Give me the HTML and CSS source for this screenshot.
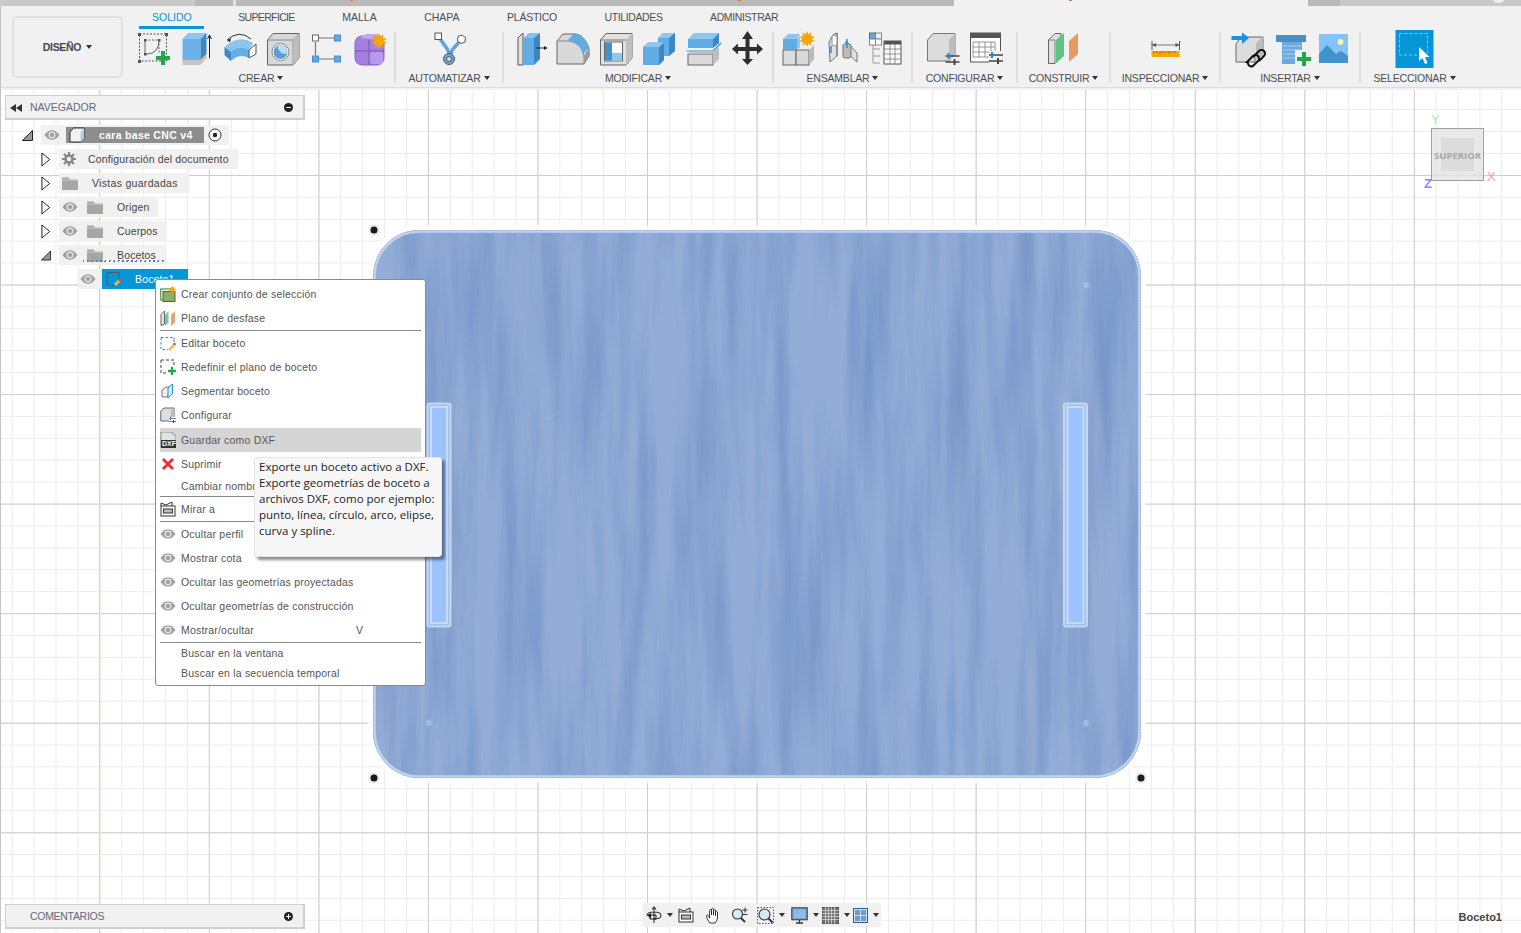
FILE: index.html
```html
<!DOCTYPE html>
<html lang="es">
<head>
<meta charset="utf-8">
<title>Fusion</title>
<link rel="stylesheet" href="styles.css">
</head>
<body>
<svg class="defs" width="0" height="0">
  <defs>
    <symbol id="eye" viewBox="0 0 16 10"><path d="M0.5 5C3 1.5 5.5 0.2 8 0.2S13 1.5 15.5 5C13 8.5 10.500 9.800 8 9.800S3 8.500 0.5 5Z" fill="#a0a0a0"/><circle cx="8" cy="5" r="3.400" fill="#e8e8e8"/><circle cx="8" cy="5" r="2.200" fill="#a0a0a0"/></symbol>
    <symbol id="folder" viewBox="0 0 16 14"><path d="M0 1.500h6.500l1.500 2H16V14H0Z" fill="#a6a6a6"/><path d="M0 4h16" stroke="#d8d8d8" stroke-width=".8"/></symbol>
    <symbol id="star" viewBox="0 0 16 16"><path d="M8 0l1.600 3.600L12.500 1l-.6 4L16 5.700l-3.300 2.300L16 10.300l-4.100.7.600 4-2.900-2.600L8 16l-1.600-3.600L3.500 15l.6-4L0 10.300l3.300-2.300L0 5.700 4.100 5l-.6-4 2.900 2.600Z" fill="#f5a50c"/></symbol>
    <symbol id="plus" viewBox="0 0 14 14"><path d="M5 0h4v5h5v4H9v5H5V9H0V5h5Z" fill="#1fa84a"/></symbol>
    <symbol id="slider" viewBox="0 0 14 12"><path d="M0 3h14M0 9h14" stroke="#444" stroke-width="1.400"/><path d="M3 0v6" stroke="#1a8ad4" stroke-width="2"/><path d="M9 6v6" stroke="#444" stroke-width="2"/></symbol>
  </defs>
</svg>
<div class="app">
  <div class="browser-tabs">
    <span class="bt bt-a"></span><span class="bt bt-b"></span><span class="bt bt-gap"></span><span class="bt bt-c"></span><span class="bt bt-active"></span><span class="bt bt-d"></span><span class="bt bt-e"></span>
  </div>
  <header class="ribbon">
    <div class="design-wrap"><button class="design">DISEÑO<i class="caret caret-dark"></i></button></div>
    <div class="ribbon-main">
      <nav class="tabs">
        <span class="tab tab-active">SOLIDO</span><span class="tab tab-n1">SUPERFICIE</span><span class="tab">MALLA</span><span class="tab">CHAPA</span><span class="tab tab-n3">PLÁSTICO</span><span class="tab tab-n2">UTILIDADES</span><span class="tab tab-n2">ADMINISTRAR</span>
      </nav>
      <div class="groups">
        <section class="group g1">
          <div class="icons">
            <svg class="ic" viewBox="0 0 43 38"><rect x="6.500" y="4" width="27" height="27" fill="none" stroke="#555" stroke-dasharray="2 1.500"/><g fill="#555"><rect x="5" y="3" width="3" height="3"/><rect x="32" y="3" width="3" height="3"/><rect x="5" y="30" width="3" height="3"/></g><path d="M12 10h14v14" fill="none" stroke="#666" stroke-dasharray="2 1.500"/><path d="M12 10v14h3q11 -1 11 -14" fill="none" stroke="#666"/><g fill="#555"><rect x="11" y="9" width="2.500" height="2.500"/><rect x="25" y="9" width="2.500" height="2.500"/><rect x="11" y="23" width="2.500" height="2.500"/></g><use href="#plus" x="23" y="21" width="14" height="14"/></svg>
            <svg class="ic" viewBox="0 0 43 38"><path d="M6.500 9L12 3H30.500L24.500 9Z" fill="#8ec4ee"/><rect x="6.500" y="9" width="18" height="21" fill="#6cb0e6"/><path d="M24.500 9L30.500 3V24L24.500 30Z" fill="#3f87c0"/><path d="M6.500 30H24.500L30.500 24V28L24.500 35H6.500Z" fill="#c4c4c4"/><path d="M33.500 28V6M31.500 9l2-4 2 4" fill="none" stroke="#222" stroke-width="1"/></svg>
            <svg class="ic" viewBox="0 0 43 38"><path d="M8 10Q20 -1 32 9" fill="none" stroke="#333"/><path d="M8 10l4-1.500-1 4Z" fill="#333"/><path d="M5.500 17Q20 4 34 13L30 20Q20 14 12 22Z" fill="#8cc4f0"/><path d="M5.500 17L12 22V31L5.500 25Z" fill="#3d8ac8"/><path d="M12 22Q20 14 30 20V28Q20 23 12 31Z" fill="#62ace8"/><path d="M30 20L37 14V24L30 28Z" fill="#fff" stroke="#555"/></svg>
            <svg class="ic" viewBox="0 0 43 38"><path d="M5.500 10L11 3.500H37V28L31 35H5.500Z" fill="#d8d8d8" stroke="#666"/><path d="M5.500 10H31V35M31 10L37 3.500" fill="none" stroke="#888"/><path d="M31 10L37 3.500V28L31 35Z" fill="#bdbdbd"/><circle cx="18.500" cy="22" r="8.500" fill="#fff" stroke="#888"/><circle cx="18.500" cy="22" r="7" fill="#5a9fd8"/><path d="M16 15.500a7 7 0 0 0 9 8a7 7 0 0 0-9-8Z" fill="#bcdcf6"/></svg>
            <svg class="ic" viewBox="0 0 43 38"><path d="M14 8H29M14 29H29M10.500 12V25" stroke="#777" stroke-width="1.200"/><rect x="7.500" y="5" width="6" height="6" fill="#fff" stroke="#666"/><g fill="#62a8e0" stroke="#4a8fc8"><rect x="29.500" y="5" width="6" height="6"/><rect x="7.500" y="26" width="6" height="6"/><rect x="29.500" y="26" width="6" height="6"/></g></svg>
            <svg class="ic" viewBox="0 0 43 38"><rect x="7" y="6" width="29" height="29" rx="7" fill="#a47fe0" stroke="#8a62cc"/><path d="M7 21H36M21 10V35" stroke="#7c54c0"/><path d="M12 8L18 4H30L24 9Z" fill="#c2a6ee"/><rect x="22" y="22" width="13" height="12" rx="3" fill="#b79ae8"/><use href="#star" x="23" y="3" width="16" height="16"/></svg>
          </div>
          <div class="glabel">CREAR<i class="caret"></i></div>
        </section>
        <section class="group g2">
          <div class="icons">
            <svg class="ic" viewBox="0 0 43 38"><path d="M10 6L20 20M33 10L24 20M20 20L22 28M24 20L22 28" fill="none" stroke="#5fa3d8" stroke-width="3.500"/><rect x="7" y="3" width="6.500" height="6.500" fill="#fff" stroke="#555"/><path d="M30 6.500l4-1.500 3.500 2.500-.5 4.500-4 1.500-3.500-2.500Z" fill="#fff" stroke="#555"/><circle cx="21" cy="29" r="5.500" fill="#6ea6d0" stroke="#557"/><circle cx="21" cy="29" r="2.500" fill="#ddd" stroke="#555"/></svg>
          </div>
          <div class="glabel">AUTOMATIZAR<i class="caret"></i></div>
        </section>
        <section class="group g3">
          <div class="icons">
            <svg class="ic" viewBox="0 0 43 38"><path d="M11 8L16 3V35H11Z" fill="#e0e0e0" stroke="#555"/><path d="M16.500 8L22 3H33L27 8Z" fill="#86bfec"/><rect x="16.500" y="8" width="10.500" height="27" fill="#62ace6"/><path d="M27 8L33 3V29L27 35Z" fill="#3d86c2"/><path d="M29 18H40" stroke="#222"/><path d="M37 16l3.500 2-3.500 2Z" fill="#222"/></svg>
            <svg class="ic" viewBox="0 0 43 38"><path d="M6 11L12 4H25Q33 5 38 18V26L33 34H6Z" fill="#d8d8d8" stroke="#666"/><path d="M6 11H18Q31 13 33 26V34" fill="none" stroke="#888"/><path d="M17 10L23 3Q35 6 38 18L32 24Q29 13 17 10Z" fill="#62ace6"/><path d="M33 26L38 18V26L33 34Z" fill="#9a9a9a"/></svg>
            <svg class="ic" viewBox="0 0 43 38"><path d="M5.500 10L11 3.500H37V28L31 35H5.500Z" fill="#e0e0e0" stroke="#666"/><path d="M31 10L37 3.500V28L31 35Z" fill="#bfbfbf"/><rect x="9.500" y="12" width="18" height="19" fill="#fff" stroke="#666"/><rect x="10" y="23" width="17" height="7.500" fill="#8cc8fa"/><rect x="10" y="12.500" width="7" height="18" fill="#4a90c8"/><path d="M5.500 10H31" stroke="#777"/></svg>
            <svg class="ic" viewBox="0 0 43 38"><path d="M5 17L10 12.500H20V8L25 3H37L37 21L31 26H26V30L21 35H5Z" fill="#62ace6"/><path d="M20 8L25 3H37L31 8Z" fill="#8ec6f0"/><path d="M31 8L37 3V21L31 26ZM21 17L26 13V30L21 35Z" fill="#3d86c2"/><path d="M5 17L10 12.500H26L21 17Z" fill="#8ec6f0"/></svg>
            <svg class="ic" viewBox="0 0 43 38"><path d="M6 9L12 3H37L31 9Z" fill="#8ec6f0"/><rect x="6" y="9" width="25" height="9" fill="#62ace6"/><path d="M31 9L37 3V13L31 18Z" fill="#3d86c2"/><path d="M4.500 21H31L39 13" fill="none" stroke="#2b8bd6" stroke-width="1.200"/><rect x="6" y="24" width="25" height="11" fill="#dadada" stroke="#666"/><path d="M6 24L10 21H31L37 17V29L31 35V24Z" fill="#bebebe"/></svg>
            <svg class="ic" viewBox="0 0 43 38"><path d="M21.500 1L27 9H23.500V17H31V13.500L37 19 31 24.500V21H23.500V29H27L21.500 35 16 29H19.500V21H12V24.500L6 19 12 13.500V17H19.500V9H16Z" fill="#2e2e2e"/></svg>
          </div>
          <div class="glabel">MODIFICAR<i class="caret"></i></div>
        </section>
        <section class="group g4">
          <div class="icons">
            <svg class="ic" viewBox="0 0 43 38"><rect x="5" y="20" width="13" height="15" fill="#dcdcdc" stroke="#666"/><rect x="18" y="20" width="13" height="15" fill="#d8d8d8" stroke="#666"/><path d="M31 20L36 15V29L31 35Z" fill="#bbb"/><rect x="5" y="9" width="14" height="11" fill="#62ace6"/><path d="M5 9L10 4H22L19 9ZM19 9L22 6V17L19 20Z" fill="#8ec6f0"/><use href="#star" x="21" y="1" width="16" height="16"/></svg>
            <svg class="ic" viewBox="0 0 43 38"><path d="M8 12Q12 3 16 3V26L9 32Z" fill="#e0e0e0" stroke="#777"/><path d="M16 3L16 26" stroke="#777"/><rect x="11" y="5" width="5" height="11" rx="2" fill="#fff" stroke="#888"/><path d="M10 16V23" stroke="#2b8bd6" stroke-width="1.500"/><path d="M25 11L36 23V32L25 22Z" fill="#e0e0e0" stroke="#777"/><rect x="22" y="14" width="8" height="14" rx="2" fill="#bbb" stroke="#777"/><path d="M26 9V18" stroke="#2b8bd6" stroke-width="1.500"/></svg>
            <svg class="ic" viewBox="0 0 43 38"><rect x="5.500" y="3" width="6" height="6" fill="#62ace6" stroke="#666"/><rect x="11.500" y="3" width="6" height="6" fill="none" stroke="#888"/><rect x="5.500" y="9" width="6" height="6" fill="#fff" stroke="#888"/><rect x="11.500" y="9" width="6" height="6" fill="#fff" stroke="#888"/><path d="M9 15V33M9 19H16M9 26H16M9 33H16" fill="none" stroke="#999"/><rect x="20" y="11" width="17" height="23" fill="#fff" stroke="#555"/><rect x="20" y="11" width="17" height="3.500" fill="#555"/><path d="M20 19H37M20 24H37M20 29H37M26 14V34M31 14V34" stroke="#777" stroke-width=".8"/></svg>
          </div>
          <div class="glabel">ENSAMBLAR<i class="caret"></i></div>
        </section>
        <section class="group g5">
          <div class="icons">
            <svg class="ic" viewBox="0 0 43 38"><path d="M5.500 10L11 3.500H33V25H28V31H5.500Z" fill="#dcdcdc" stroke="#777"/><path d="M27 10L33 3.500V25L27 31Z" fill="#bcbcbc"/><use href="#slider" x="23" y="23" width="15" height="12"/></svg>
            <svg class="ic" viewBox="0 0 43 38"><rect x="5.500" y="3" width="30" height="29" fill="#fff" stroke="#555"/><rect x="5.500" y="3" width="30" height="5" fill="#555"/><path d="M8 12H30V27H8ZM8 17H30M8 22H30M14 12V27M20 12V27M26 12V27" fill="none" stroke="#888" stroke-width=".9"/><rect x="24" y="21" width="14" height="13" fill="#f1f1f1"/><use href="#slider" x="24" y="22" width="14" height="12"/></svg>
          </div>
          <div class="glabel">CONFIGURAR<i class="caret"></i></div>
        </section>
        <section class="group g6">
          <div class="icons">
            <svg class="ic" viewBox="0 0 43 38"><path d="M6.500 10L13 3.500H19V27L13 33.500H6.500Z" fill="#e0e0e0" stroke="#666"/><path d="M6.500 10H13V33.500" fill="none" stroke="#888"/><path d="M14 10L22 3V26L14 33Z" fill="#5cc583"/><path d="M27 11L36 3V24L27 32Z" fill="#e69a62"/></svg>
          </div>
          <div class="glabel">CONSTRUIR<i class="caret"></i></div>
        </section>
        <section class="group g7">
          <div class="icons">
            <svg class="ic" viewBox="0 0 43 38"><path d="M8 11V20M35.500 11V20" stroke="#555"/><path d="M8 15H35.500" stroke="#777"/><path d="M8 15l4-2v4ZM35.500 15l-4-2v4Z" fill="#555"/><rect x="7.500" y="21" width="28" height="6" fill="#f5a700"/><path d="M10 21v2M13 21v2M16 21v3M19 21v2M22 21v2M25 21v3M28 21v2M31 21v2" stroke="#8a5a00" stroke-width=".8"/></svg>
          </div>
          <div class="glabel">INSPECCIONAR<i class="caret"></i></div>
        </section>
        <section class="group g8">
          <div class="icons">
            <svg class="ic" viewBox="0 0 43 38"><path d="M10 14L15 7H37V24H29V32H10Z" fill="#dcdcdc" stroke="#666"/><path d="M30 13L37 7V26L30 30Z" fill="#bcbcbc"/><path d="M5.500 6H16V2.500L23 8 16 14V10H5.500Z" fill="#1b8fe0"/><path d="M21 32l6-6a3.500 3.500 0 0 1 5 5l-5 5a3.500 3.500 0 0 1-5-4ZM27 27l6-6a3.500 3.500 0 0 1 5 5l-5 5" fill="none" stroke="#111" stroke-width="2"/></svg>
            <svg class="ic" viewBox="0 0 43 38"><path d="M7 5H37V12H33V34H13V12H7Z" fill="#6ea9dc"/><rect x="7" y="5" width="30" height="7" fill="#4a90c8"/><path d="M14 16H32M14 20H32M14 24H32M14 28H32" stroke="#a9d0f0"/><rect x="26" y="20" width="16" height="16" fill="#f1f1f1"/><use href="#plus" x="28" y="22" width="14" height="14"/></svg>
            <svg class="ic" viewBox="0 0 43 38"><rect x="7" y="4" width="29" height="29" fill="#82c4fa"/><circle cx="28.500" cy="12" r="3" fill="#fdf3b0"/><path d="M7 24L15 15 24 24 29 21 36 26V33H7Z" fill="#3f92cc"/></svg>
          </div>
          <div class="glabel">INSERTAR<i class="caret"></i></div>
        </section>
        <section class="group g9">
          <div class="icons">
            <svg class="ic" viewBox="0 0 43 38"><rect x="2.500" y="0" width="38" height="38" fill="#0696d7"/><rect x="6.500" y="3.500" width="28" height="21.500" fill="none" stroke="#7fe08a" stroke-dasharray="3 2"/><path d="M26 17V31L29.500 28 32 34 34.500 33 32 27H36.500Z" fill="#fff"/></svg>
          </div>
          <div class="glabel">SELECCIONAR<i class="caret"></i></div>
        </section>
      </div>
    </div>
  </header>

  <main class="viewport">
    <svg class="model" viewBox="0 0 800 580" width="800" height="580">
      <defs>
        <filter id="wood" x="0" y="0" width="100%" height="100%" color-interpolation-filters="sRGB">
          <feTurbulence type="fractalNoise" baseFrequency="0.05 0.004" numOctaves="5" seed="11"/>
          <feColorMatrix values="0 0 0 0 .36  0 0 0 0 .50  0 0 0 0 .74  1.700 0 0 0 -.62"/>
        </filter>
        <filter id="soft" x="-50%" y="-50%" width="200%" height="200%"><feGaussianBlur stdDeviation="9 24"/></filter>
        <clipPath id="plate"><rect x="16" y="16" width="768" height="548" rx="46"/></clipPath>
      </defs>
      <rect x="11" y="11" width="778" height="558" rx="50" fill="#fff" opacity=".8"/>
      <rect x="16" y="16" width="768" height="548" rx="46" fill="#93add6"/>
      <g clip-path="url(#plate)">
        <rect x="16" y="16" width="768" height="548" filter="url(#wood)" opacity=".55"/>
        <g filter="url(#soft)" fill="#6484b8" opacity=".2">
          <ellipse cx="345" cy="216" rx="18" ry="60"/>
          <ellipse cx="190" cy="100" rx="14" ry="70"/>
          <ellipse cx="445" cy="470" rx="16" ry="70"/>
          <ellipse cx="600" cy="250" rx="16" ry="100"/>
        </g>
      </g>
      <rect x="17.500" y="17.500" width="765" height="545" rx="45" fill="none" stroke="#c0d3ef" stroke-width="2.500"/>
      <rect x="16.500" y="16.500" width="767" height="547" rx="46" fill="none" stroke="#8aa0c4" stroke-width=".6" stroke-dasharray="1 2"/>
      <g class="slot">
        <rect x="70.500" y="189.500" width="23" height="223" rx="2" fill="#a8c0e6" stroke="#c3d6f2" stroke-width="2"/>
        <rect x="73" y="192" width="18" height="218" fill="#c6dcfa"/>
        <rect x="75" y="194" width="14" height="214" fill="#9cc3ff"/>
      </g>
      <g class="slot">
        <rect x="707" y="189.500" width="23" height="223" rx="2" fill="#a8c0e6" stroke="#c3d6f2" stroke-width="2"/>
        <rect x="709.500" y="192" width="18" height="218" fill="#c6dcfa"/>
        <rect x="711.500" y="194" width="14" height="214" fill="#9cc3ff"/>
      </g>
      <g fill="#a3bce2" stroke="#8ea9d4"><circle cx="729" cy="71" r="3.500"/><circle cx="72" cy="509" r="3.500"/><circle cx="729" cy="509" r="3.500"/></g>
      <g fill="#1c1c1c" stroke="#e8e8e8" stroke-width="2"><circle cx="17" cy="16" r="4.500"/><circle cx="17" cy="564" r="4.500"/><circle cx="784" cy="564" r="4.500"/></g>
    </svg>

    <div class="axis-y"></div>

    <div class="panel navigator">
      <svg class="collapse" viewBox="0 0 12 8" width="12" height="8"><path d="M6 0v8L0 4ZM12 0v8L6 4Z" fill="#333"/></svg>
      <span class="panel-title">NAVEGADOR</span>
      <span class="pm pm-minus"></span>
    </div>

    <div class="tree">
      <div class="row l0">
        <svg class="twist" viewBox="0 0 11 11"><path d="M.5 10.500L10.500.5V10.500Z" fill="#999" stroke="#222"/></svg>
        <div class="pill pill-root">
          <svg class="eye" viewBox="0 0 16 10"><use href="#eye"/></svg>
          <div class="rootbar">
            <svg class="boxicon" viewBox="0 0 16 16"><path d="M1 5L4.500 1H15V12L11.500 15H1Z" fill="#f2f2f2" stroke="#333"/><path d="M11.500 5L15 1V12L11.500 15Z" fill="#b9cde0"/></svg>
            <span>cara base CNC v4</span>
          </div>
          <svg class="radio" viewBox="0 0 14 14"><circle cx="7" cy="7" r="6" fill="#fff" stroke="#333"/><circle cx="7" cy="7" r="2.200" fill="#222"/></svg>
        </div>
      </div>
      <div class="row l1">
        <svg class="twist" viewBox="0 0 11 16"><path d="M1 .8L9.500 8 1 15.200Z" fill="#fff" stroke="#222" stroke-width="1.100"/></svg>
        <div class="pill pill-doc">
          <svg class="gear" viewBox="0 0 14 14"><circle cx="7" cy="7" r="3.500" fill="none" stroke="#888" stroke-width="2.600"/><path d="M7 0v3M7 11v3M0 7h3M11 7h3M2 2l2 2M10 10l2 2M12 2l-2 2M4 10l-2 2" stroke="#888" stroke-width="2.200"/></svg>
          <span>Configuración del documento</span>
        </div>
      </div>
      <div class="row l1">
        <svg class="twist" viewBox="0 0 11 16"><path d="M1 .8L9.500 8 1 15.200Z" fill="#fff" stroke="#222" stroke-width="1.100"/></svg>
        <div class="pill pill-views">
          <svg class="folder" viewBox="0 0 16 14"><use href="#folder"/></svg>
          <span>Vistas guardadas</span>
        </div>
      </div>
      <div class="row l1">
        <svg class="twist" viewBox="0 0 11 16"><path d="M1 .8L9.500 8 1 15.200Z" fill="#fff" stroke="#222" stroke-width="1.100"/></svg>
        <div class="pill pill-item">
          <svg class="eye" viewBox="0 0 16 10"><use href="#eye"/></svg>
          <svg class="folder" viewBox="0 0 16 14"><use href="#folder"/></svg>
          <span>Origen</span>
        </div>
      </div>
      <div class="row l1">
        <svg class="twist" viewBox="0 0 11 16"><path d="M1 .8L9.500 8 1 15.200Z" fill="#fff" stroke="#222" stroke-width="1.100"/></svg>
        <div class="pill pill-item">
          <svg class="eye" viewBox="0 0 16 10"><use href="#eye"/></svg>
          <svg class="folder" viewBox="0 0 16 14"><use href="#folder"/></svg>
          <span>Cuerpos</span>
        </div>
      </div>
      <div class="row l1">
        <svg class="twist" viewBox="0 0 11 11"><path d="M.5 10.500L10.500.5V10.500Z" fill="#999" stroke="#222"/></svg>
        <div class="pill pill-item pill-wavy">
          <svg class="eye" viewBox="0 0 16 10"><use href="#eye"/></svg>
          <svg class="folder" viewBox="0 0 16 14"><use href="#folder"/></svg>
          <span>Bocetos</span>
        </div>
      </div>
      <div class="row l2">
        <div class="pill pill-sketch">
          <svg class="eye" viewBox="0 0 16 10"><use href="#eye"/></svg>
          <div class="sel">
            <svg class="sk" viewBox="0 0 16 16"><path d="M1 1.500H13V8M1 1.500V14H8" fill="none" stroke="#5a4a4a" stroke-dasharray="2.500 1"/><path d="M9 14L14 9" stroke="#f5b042" stroke-width="3"/><circle cx="14" cy="9" r="1.500" fill="#d8433a"/></svg>
            <span>Boceto1</span>
          </div>
        </div>
      </div>
    </div>

    <div class="menu">
      <div class="mi"><svg class="mic" viewBox="0 0 16 16"><rect x=".8" y="3" width="12" height="11" fill="none" stroke="#1e7d2e"/><rect x="3" y="5.500" width="12" height="10" fill="#8fae6a" stroke="#4c6a2e"/><use href="#star" x="9" y="0" width="7" height="7"/></svg><span>Crear conjunto de selección</span></div>
      <div class="mi"><svg class="mic" viewBox="0 0 16 16"><path d="M1 4.500L4.500 1V14L1 15.500Z" fill="#e6e6e6" stroke="#666"/><path d="M5 5L8.500 1V12.500L5 16Z" fill="#7dc698"/><path d="M11 5L15 1V12.500L11 16Z" fill="#e6a477"/></svg><span>Plano de desfase</span></div>
      <hr class="msep">
      <div class="mi"><svg class="mic" viewBox="0 0 16 16"><path d="M1 2.500H14M1 2.500V14.500H8" fill="none" stroke="#2f90d8" stroke-dasharray="2.500 2"/><path d="M14 2.500V7" stroke="#2f90d8"/><path d="M9 15L14 10" stroke="#f5c16a" stroke-width="3"/><circle cx="14.500" cy="9" r="1.300" fill="#d8433a"/></svg><span>Editar boceto</span></div>
      <div class="mi"><svg class="mic" viewBox="0 0 16 16"><path d="M1 1H14V8M1 1V14H8" fill="none" stroke="#444" stroke-dasharray="3 2"/><use href="#plus" x="8" y="8" width="8" height="8"/></svg><span>Redefinir el plano de boceto</span></div>
      <div class="mi"><svg class="mic" viewBox="0 0 16 16"><path d="M2 7L6 4H12V11H8V14H2Z" fill="#eee" stroke="#777"/><path d="M8 5L12.500 1V11L8 15Z" fill="#d6e9f8" stroke="#2f90d8"/></svg><span>Segmentar boceto</span></div>
      <div class="mi"><svg class="mic" viewBox="0 0 16 16"><path d="M.8 4L4 1H14V10H10V14H.8Z" fill="#dedede" stroke="#666"/><path d="M11 4L14 1V10L11 13Z" fill="#bcbcbc"/><rect x="9" y="10" width="7" height="6" fill="#fff"/><use href="#slider" x="9" y="10" width="7" height="6"/></svg><span>Configurar</span></div>
      <div class="mi mi-hover"><svg class="mic mic-dxf" viewBox="0 0 16 16"><path d="M1 0H11L16 4V16H1Z" fill="#e2e2e2" stroke="#555" stroke-width=".6"/><path d="M1 8H16V16H1Z" fill="#333"/></svg><span class="dxf">DXF</span><span>Guardar como DXF</span></div>
      <div class="mi"><svg class="mic" viewBox="0 0 16 16"><path d="M3 3L13 13M13 3L3 13" stroke="#e8323c" stroke-width="3"/></svg><span>Suprimir</span></div>
      <div class="mi mi-short"><span class="noicon">Cambiar nombre</span></div>
      <hr class="msep">
      <div class="mi"><svg class="mic" viewBox="0 0 16 16"><rect x="1" y="5" width="14" height="10" fill="#fff" stroke="#333"/><rect x="3.500" y="8" width="9" height="4" fill="#bbb" stroke="#333"/><path d="M1 5V2L6 4L12 1V5" fill="none" stroke="#333"/></svg><span>Mirar a</span></div>
      <hr class="msep">
      <div class="mi"><svg class="mic mic-eye" viewBox="0 0 16 10"><use href="#eye"/></svg><span>Ocultar perfil</span></div>
      <div class="mi"><svg class="mic mic-eye" viewBox="0 0 16 10"><use href="#eye"/></svg><span>Mostrar cota</span></div>
      <div class="mi"><svg class="mic mic-eye" viewBox="0 0 16 10"><use href="#eye"/></svg><span>Ocultar las geometrías proyectadas</span></div>
      <div class="mi"><svg class="mic mic-eye" viewBox="0 0 16 10"><use href="#eye"/></svg><span>Ocultar geometrías de construcción</span></div>
      <div class="mi"><svg class="mic mic-eye" viewBox="0 0 16 10"><use href="#eye"/></svg><span>Mostrar/ocultar</span><span class="key">V</span></div>
      <hr class="msep">
      <div class="mi mi-short"><span class="noicon">Buscar en la ventana</span></div>
      <div class="mi mi-short"><span class="noicon">Buscar en la secuencia temporal</span></div>
    </div>

    <div class="tooltip">Exporte un boceto activo a DXF.<br>Exporte geometrías de boceto a<br>archivos DXF, como por ejemplo:<br>punto, línea, círculo, arco, elipse,<br>curva y spline.</div>

    <div class="viewcube">
      <span class="vc-axis vc-y">Y</span>
      <span class="vc-axis vc-x">X</span>
      <span class="vc-axis vc-z">Z</span>
      <div class="vc-inner"></div>
      <span class="vc-label">SUPERIOR</span>
    </div>

    <div class="panel comments">
      <span class="panel-title title-tight">COMENTARIOS</span>
      <span class="pm pm-plus"></span>
    </div>

    <div class="navbar">
      <svg class="nb nb-orbit" viewBox="0 0 16 18"><path d="M8 1v16M6 3.500l2-2.500 2 2.500M1 9.500Q1 6 8 6t7 3.500-7 3.500" fill="none" stroke="#333" stroke-width="1.100"/><path d="M1 9.500L5 7v5Z" fill="#111"/><path d="M4 9h6v4H4Z" fill="none" stroke="#111"/></svg><i class="caret caret-nb"></i>
      <svg class="nb nb-look" viewBox="0 0 16 16"><rect x="1" y="5" width="14" height="10" fill="#fff" stroke="#333"/><rect x="3.500" y="8" width="9" height="4" fill="#bbb" stroke="#333"/><path d="M1 5V2L6 4L12 1V5" fill="none" stroke="#333"/></svg>
      <svg class="nb nb-hand" viewBox="0 0 17 17"><path d="M4 15Q1 10 1.500 8.500T4 9.500L4.500 11V3.500Q5.500 2 6.500 3.500V8V2Q7.500 .5 8.500 2V8V2.500Q9.500 1.500 10.500 3V8.500V4.500Q11.500 3.500 12.500 5V11Q12 14 10 16H5Z" fill="#fff" stroke="#222" stroke-width=".9"/></svg>
      <svg class="nb nb-zoom" viewBox="0 0 18 16"><circle cx="6.500" cy="7" r="5" fill="#d6e9f6" stroke="#333" stroke-width="1.100"/><path d="M10 11l4 4" stroke="#333" stroke-width="2"/><path d="M14 .5v5M11.500 3h5M11.500 7.500h5" stroke="#333"/></svg>
      <svg class="nb nb-fit" viewBox="0 0 17 17"><rect x=".5" y=".5" width="16" height="16" fill="none" stroke="#555" stroke-dasharray="1.500 1.500"/><circle cx="7.500" cy="7.500" r="5.500" fill="#d6e9f6" stroke="#333" stroke-width="1.100"/><path d="M11.500 11.500l4 4" stroke="#333" stroke-width="2"/></svg><i class="caret caret-nb"></i>
      <svg class="nb nb-display" viewBox="0 0 17 17"><rect x=".8" y=".8" width="15.400" height="12" fill="#6ea5d8" stroke="#333"/><rect x="2.500" y="2.500" width="12" height="8.600" fill="#8fbbe4"/><path d="M5 16h7M8.500 13v3" stroke="#333" stroke-width="1.300"/></svg><i class="caret caret-nb"></i>
      <svg class="nb nb-grid" viewBox="0 0 17 17"><rect x=".5" y=".5" width="16" height="16" fill="#777" stroke="#555"/><path d="M3.500 0v17M6.500 0v17M9.500 0v17M12.500 0v17M0 3.500h17M0 6.500h17M0 9.500h17M0 12.500h17" stroke="#ddd" stroke-width=".7"/></svg><i class="caret caret-nb"></i>
      <svg class="nb nb-views" viewBox="0 0 15 15"><rect x=".5" y=".5" width="14" height="14" fill="#cfe0f0" stroke="#2e5f92"/><rect x="2" y="2" width="5" height="5" fill="#6f9dcb"/><rect x="8" y="2" width="5" height="5" fill="#6f9dcb"/><rect x="2" y="8" width="5" height="5" fill="#6f9dcb"/><rect x="8" y="8" width="5" height="5" fill="#6f9dcb"/></svg><i class="caret caret-nb"></i>
    </div>

    <div class="status">Boceto1</div>
  </main>
</div>
</body>
</html>
```
FILE: styles.css
```css
* { box-sizing: border-box; }
html, body { margin: 0; height: 100%; overflow: hidden; }
body { font-family: "Liberation Sans", Arial, sans-serif; font-size: 10.5px; color: #555; background: #fff; }
.defs { position: absolute; }
.app { display: flex; flex-direction: column; height: 933px; width: 1521px; }

.browser-tabs { display: flex; height: 6px; flex: none; }
.bt { display: block; height: 6px; position: relative; overflow: hidden; }
.bt-a { width: 195px; background: #c9c9c9; }
.bt-b { width: 38px; background: #b9b9b9; }
.bt-gap { width: 3px; background: #e4e4e4; }
.bt-c { width: 718px; background: #b9b9b9; }
.bt-active { width: 354px; background: #f1f1f1; }
.bt-d { width: 32px; background: #b9b9b9; }
.bt-e { flex: 1; background: #c9c9c9; }
.bt-c::before, .bt-c::after, .bt-active::before { content: ""; position: absolute; top: 0; width: 3px; height: 1px; background: #e8742a; }
.bt-c::before { left: 114px; }
.bt-c::after { left: 502px; }
.bt-active::before { left: 115px; }
.bt-e::after { content: ""; position: absolute; left: 151px; top: -12px; width: 15px; height: 15px; border-radius: 50%; background: #efefef; }

.ribbon { display: flex; flex: none; height: 84px; background: #f1f1f1; border-left: 1px solid #c4c4c4; box-shadow: inset 0 -2px 0 #f1f1f1, inset 0 -3px 0 #dcdcdc; position: relative; z-index: 2; }
.design-wrap { width: 131px; flex: none; padding: 10px 0 0 11px; }
.design { width: 111px; height: 62px; display: flex; align-items: center; justify-content: center; gap: 5px; background: #f1f1f1; border: 2px solid #e0e0e0; border-radius: 5px; padding: 0 0 1px; font: bold 10.5px "Liberation Sans", Arial, sans-serif; letter-spacing: -.3px; color: #3c4650; }
.ribbon-main { flex: 1; display: flex; flex-direction: column; min-width: 0; }
.tabs { display: flex; height: 24px; padding: 4px 0 0 7px; gap: 21.5px; flex: none; }
.tab { padding: 0 13px; height: 20px; line-height: 14px; color: #4a4f55; white-space: nowrap; }
.tab-n1 { letter-spacing: -.65px; }
.tab-n2 { letter-spacing: -.38px; }
.tab-n3 { letter-spacing: -.25px; }
.tab-active { color: #0696d7; border-bottom: 3px solid #0696d7; height: 19px; padding-right: 12px; }
.groups { display: flex; flex: 1; align-items: stretch; }
.group { display: flex; flex-direction: column; align-items: center; border-right: 2px solid #dedede; height: 51px; margin-top: 2px; flex: none; }
.g1 { width: 264px; padding-right: 4px; }
.g2 { width: 108px; }
.g3 { width: 270px; }
.g4 { width: 139px; }
.g5 { width: 105px; }
.g6 { width: 93px; }
.g7 { width: 110px; }
.g8 { width: 140px; }
.g9 { width: 104px; border-right: 0; padding-left: 3px; }
.icons { display: flex; height: 38px; margin-top: -2px; flex: none; }
.g1 .icons { padding-left: 1px; }
.g3 .icons { gap: .8px; }
.ic { width: 43px; height: 38px; display: block; flex: none; }
.glabel { margin-top: 3px; line-height: 14px; color: #4a4f55; white-space: nowrap; display: flex; align-items: center; letter-spacing: -.2px; }
.caret { display: inline-block; width: 0; height: 0; border-left: 3px solid transparent; border-right: 3px solid transparent; border-top: 4px solid #333; margin-left: 3px; }
.caret-dark { margin-left: 0; }

.viewport { position: relative; flex: 1; border-left: 1px solid #c4c4c4; background-color: #fff;
  background-image:
    linear-gradient(to right, #cdcdcd 1px, transparent 1px),
    linear-gradient(to bottom, #cdcdcd 1px, transparent 1px),
    linear-gradient(to right, #ececec 1px, transparent 1px),
    linear-gradient(to bottom, #ececec 1px, transparent 1px);
  background-size: 109.56px 109.56px, 109.56px 109.56px, 21.912px 21.912px, 21.912px 21.912px;
  background-position: 98.3px 0, 0 85px, 10.7px 0, 0 19.2px;
}
.axis-y { position: absolute; left: 98px; top: 0; bottom: 0; width: 2px; background: linear-gradient(to right, #aeeaae 1px, #e6f8e6 1px); }
.model { position: absolute; left: 356px; top: 124px; display: block; }

.panel { position: absolute; left: 4px; width: 300px; height: 25px; background: #f1f1f1; border: 1px solid #cfcfcf; border-bottom-width: 2px; border-right-width: 2px; display: flex; align-items: center; padding-left: 24px; }
.navigator { top: 5px; }
.comments { top: 814px; }
.panel-title { color: #667; line-height: 14px; }
.title-tight { letter-spacing: -.3px; }
.collapse { position: absolute; left: 4px; top: 8px; }
.pm { position: absolute; right: 10px; top: 7px; width: 9px; height: 9px; border-radius: 50%; background: #222; }
.pm::after { content: ""; position: absolute; left: 2px; right: 2px; top: 4px; height: 1px; background: #fff; }
.pm-plus::before { content: ""; position: absolute; top: 2px; bottom: 2px; left: 4px; width: 1px; background: #fff; }

.tree { position: absolute; left: 0; top: 33px; letter-spacing: .15px; }
.row { display: flex; align-items: center; height: 24px; white-space: nowrap; }
.l0 { padding-left: 21px; gap: 8px; }
.l1 { padding-left: 40px; gap: 8px; }
.l1 .twist { width: 10px; height: 15px; }
.l2 { padding-left: 77px; }
.twist { width: 11px; height: 11px; flex: none; }
.pill { display: flex; align-items: center; height: 20px; background: #f1f1f1; color: #444; position: relative; }
.eye { width: 16px; height: 10px; flex: none; display: block; }
.folder { width: 16px; height: 14px; flex: none; }
.pill-root { width: 188px; padding-left: 3px; }
.rootbar { margin-left: 6px; width: 138px; height: 16px; background: #8e8e8e; color: #fff; display: flex; align-items: center; font-weight: bold; letter-spacing: .3px; }
.boxicon { width: 16px; height: 16px; margin-left: 3px; flex: none; }
.rootbar span { margin-left: 14px; }
.radio { width: 14px; height: 14px; margin-left: 3.5px; flex: none; }
.pill-doc { padding: 0 9px 0 3px; }
.gear { width: 14px; height: 14px; margin-right: 12px; flex: none; }
.pill-views { padding: 0 11px 0 3px; }
.pill-views .folder { margin-right: 14px; }
.pill-views span { letter-spacing: .3px; }
.pill-item { padding: 0 9px 0 3px; }
.pill-item .folder { margin: 0 14px 0 9px; }
.pill-wavy::after { content: ""; position: absolute; left: 24px; right: 0; bottom: 3px; height: 2px; background: repeating-linear-gradient(115deg, #5b74a8 0 1.5px, transparent 1.5px 4px); }
.pill-sketch { width: 110px; padding-left: 2px; }
.sel { margin-left: 6px; width: 86px; height: 20px; background: #0696d7; color: #fff; display: flex; align-items: center; }
.sk { width: 16px; height: 16px; margin-left: 4px; flex: none; }
.sel span { margin-left: 13px; }

.menu { position: absolute; left: 154px; top: 189px; width: 271px; height: 407px; background: #fff; border: 1px solid #8a8a8a; border-radius: 3px; padding: 2px 4px 0; z-index: 3; letter-spacing: .2px; }
.mi { display: flex; align-items: center; height: 24px; white-space: nowrap; color: #555; position: relative; }
.mi-short { height: 20px; }
.mi-hover { background: #d5d5d5; height: 24px; margin-top: 1px; }
.mic { width: 16px; height: 16px; flex: none; margin-right: 5px; display: block; }
.mic-eye { height: 10px; }
.noicon { margin-left: 21px; }
.msep { border: 0; height: 1px; margin: 0; background: #888; }
.dxf { position: absolute; left: 2px; bottom: 4px; width: 14px; font-size: 7px; font-weight: bold; color: #fff; line-height: 8px; text-align: center; letter-spacing: 0; }
.key { position: absolute; left: 196px; }

.tooltip { position: absolute; left: 253px; top: 367px; width: 188px; height: 100px; padding: 1px 0 0 4px; background: #f7f7f7; border: 1px solid #e4e4e4; border-radius: 3px; box-shadow: 3px 3px 3px rgba(0,0,0,.45); font: 11.5px/16px "Open Sans", "Noto Sans", sans-serif; color: #222; z-index: 4; white-space: nowrap; }

.viewcube { position: absolute; left: 1430px; top: 38px; width: 53px; height: 53px; background: rgba(225,225,225,.75); border: 1px solid #a0a0a0; }
.vc-inner { position: absolute; left: 9px; top: 9px; width: 33px; height: 33px; background: #dcdcdc; }
.vc-label { position: absolute; left: 0; right: 0; top: 20px; text-align: center; font: bold 9.5px/14px "Open Sans", sans-serif; color: #a6a6a6; z-index: 1; }
.vc-axis { position: absolute; font: 13px/14px "Liberation Sans", sans-serif; }
.vc-y { left: -1px; top: -16px; color: #a8eda8; }
.vc-x { left: 55px; top: 41px; color: #f6a0a0; }
.vc-z { left: -8px; top: 48px; color: #8a8aee; font-weight: bold; }

.navbar { position: absolute; left: 642px; top: 813px; width: 238px; height: 24px; background: #f1f1f1; display: flex; align-items: center; padding-left: 3px; }
.nb { display: block; flex: none; }
.nb-orbit { width: 16px; height: 18px; }
.caret-nb { margin-left: 5px; margin-right: 5px; }
.nb-look { width: 16px; height: 16px; margin-right: 10px; }
.nb-hand { width: 17px; height: 17px; margin-right: 9px; margin-left: 1px; }
.nb-zoom { width: 18px; height: 16px; margin-right: 8px; margin-left: 0; }
.nb-fit { width: 17px; height: 17px; }
.nb-display { width: 17px; height: 17px; margin-left: 1px; }
.nb-grid { width: 17px; height: 17px; margin-left: -2px; }
.nb-views { width: 15px; height: 15px; margin-left: -2px; }

.status { position: absolute; right: 19px; top: 820px; font-weight: bold; color: #444; font-size: 11px; line-height: 14px; }
```
